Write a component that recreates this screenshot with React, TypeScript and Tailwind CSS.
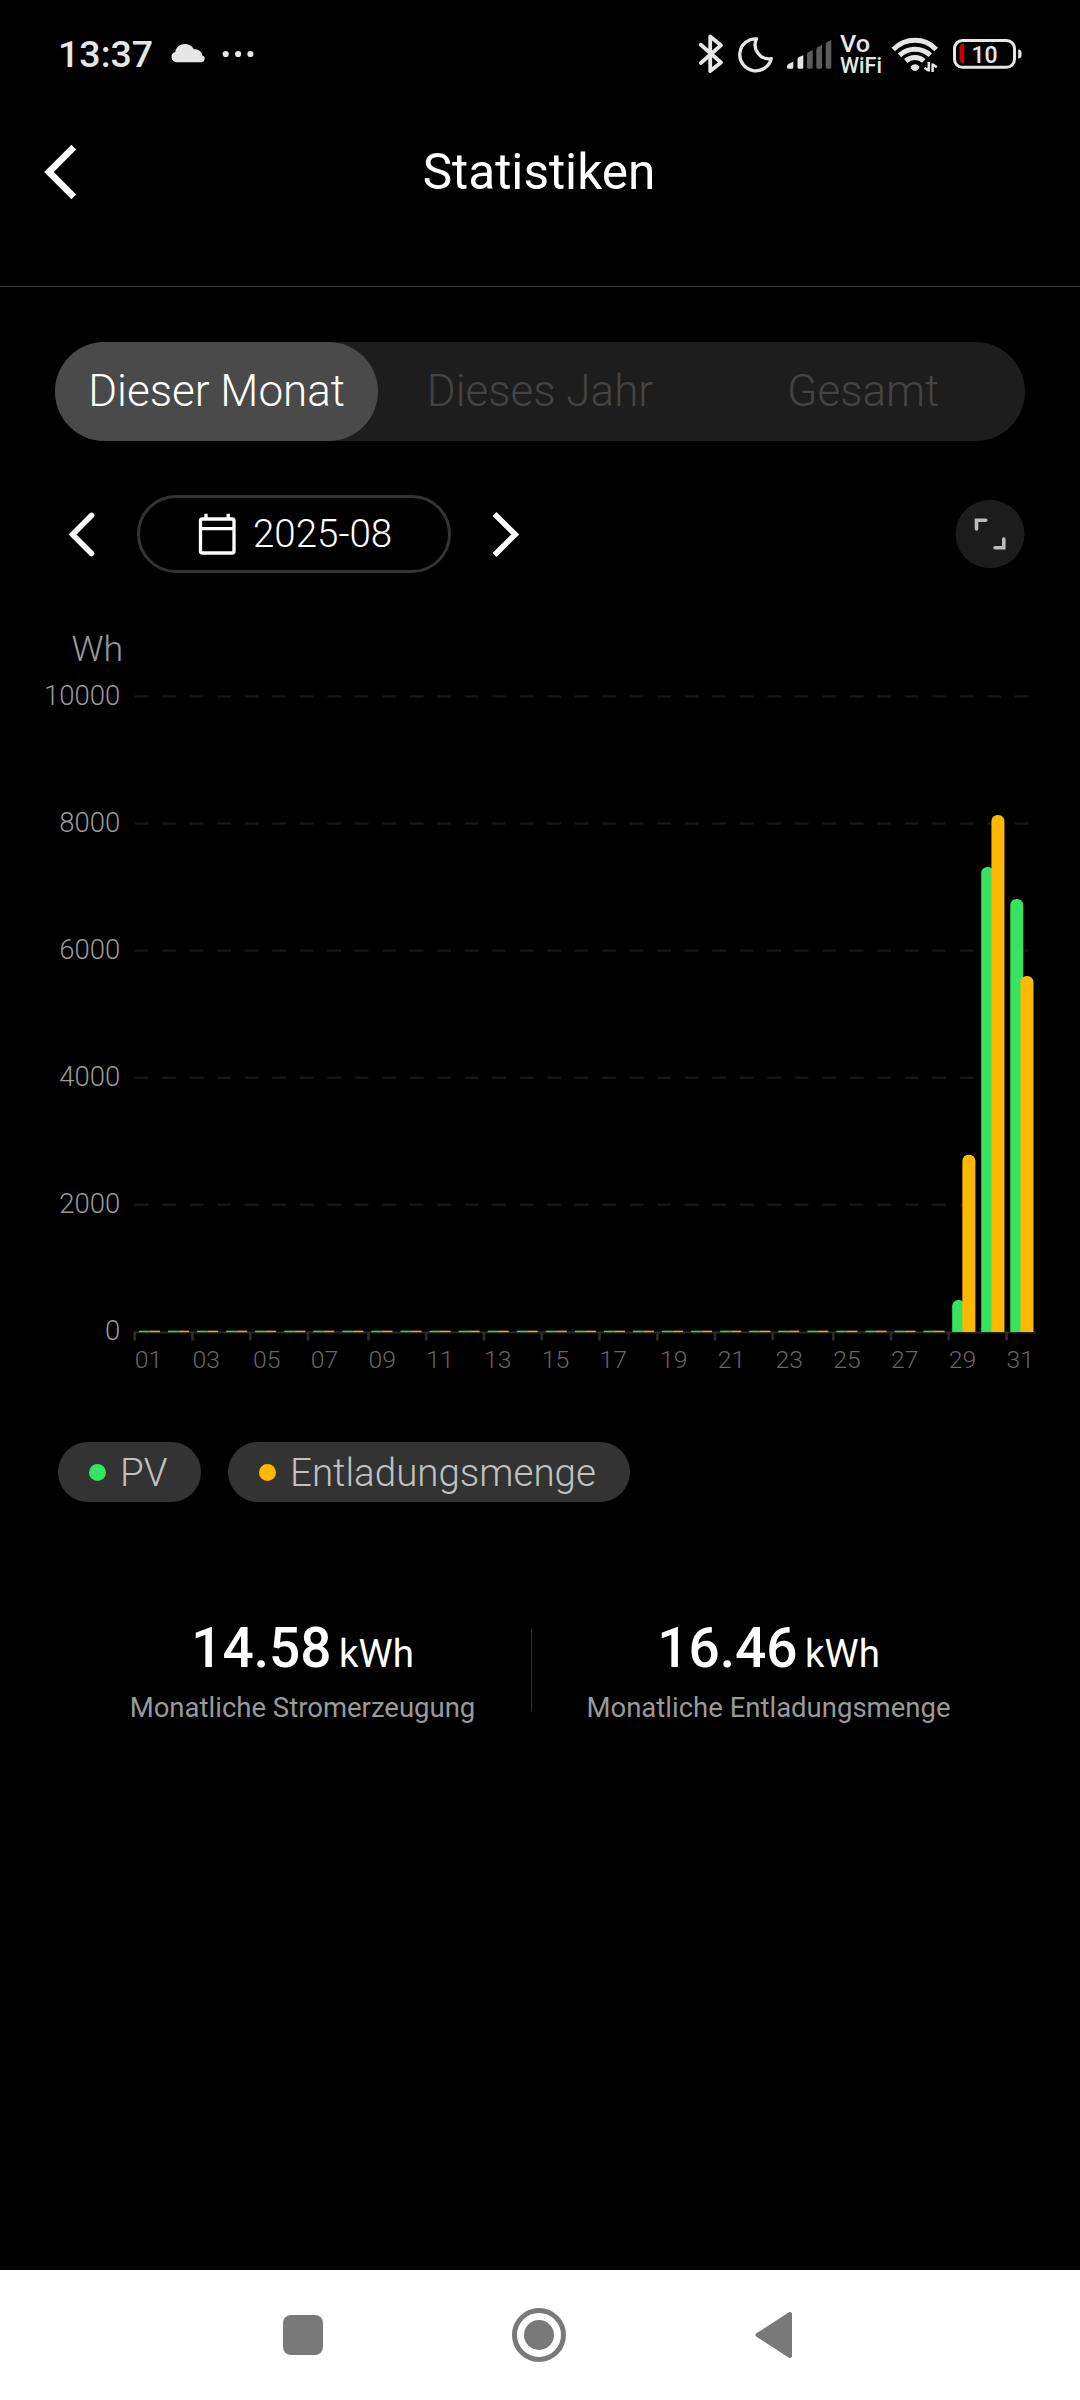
const PX = 2.75;
const BAND = 327.6 / 31;
const GREEN = "#38e45f";
const ORANGE = "#ffb800";
const BASE_Y = 1332;

const days = Array.from({ length: 31 }, (_, i) => ({
  day: String(i + 1).padStart(2, "0"),
  pvTop: [1300, 867, 899][i - 28],
  outTop: [1154.7, 815, 976][i - 28],
}));

const gridLines = [
  { label: "10000", y: 696.4 },
  { label: "8000", y: 823.5 },
  { label: "6000", y: 950.6 },
  { label: "4000", y: 1077.7 },
  { label: "2000", y: 1204.8 },
];

function barPath(x: number, top: number) {
  const w = 13;
  const r = 6;
  return `M${x} ${BASE_Y}V${top + r}a${r} ${r} 0 0 1 ${r} ${-r}h${w - 2 * r}a${r} ${r} 0 0 1 ${r} ${r}V${BASE_Y}Z`;
}

function Chart() {
  return (
    <svg className="block h-[830px] w-[1080px] shrink-0" viewBox="0 590 1080 830" fontFamily="Roboto, sans-serif" fontWeight="300">
      <text x="71.5" y="661" fontSize="35.75" fill="#999999">Wh</text>
      {gridLines.map((g) => (
        <g key={g.label}>
          <text x="120.2" y={g.y + 8.6} fontSize="27.5" fill="#999999" textAnchor="end">{g.label}</text>
          <path d={`M134.75 ${g.y}H1030`} stroke="#161616" strokeWidth="2.4" strokeDasharray="13.75 13.75" />
        </g>
      ))}
      <text x="120.2" y="1340" fontSize="27.5" fill="#999999" textAnchor="end">0</text>
      <path d="M134 1332.4H1036" stroke="#252525" strokeWidth="2.2" />
      {days.map((d, i) => {
        const x = 134.75 + i * BAND * PX;
        const tick = Math.round(49 + i * BAND) * PX;
        const mid = Math.round(49 + (i + 0.5) * BAND) * PX;
        return (
          <g key={d.day}>
            {i % 2 === 0 && <path d={`M${tick} 1332V1340.5`} stroke="#2b2b2b" strokeWidth="2.75" />}
            {i % 2 === 0 && <text x={mid} y="1368" fontSize="24.75" fill="#666666" textAnchor="middle">{d.day}</text>}
            {d.pvTop === undefined ? (
              <g>
                <rect x={x + 4.2} y="1330" width="10.4" height="1" fill="#0f4a1c" />
                <rect x={x + 4.2} y="1331" width="10.4" height="1.2" fill="#57c070" />
                <rect x={x + 14.6} y="1330" width="10.6" height="1" fill="#5a3c00" />
                <rect x={x + 14.6} y="1331" width="10.6" height="1.2" fill="#dba63a" />
              </g>
            ) : (
              <g>
                <path d={barPath(x + 3.7, d.pvTop)} fill={GREEN} />
                <path d={barPath(x + 13.9, d.outTop)} fill={ORANGE} />
              </g>
            )}
          </g>
        );
      })}
    </svg>
  );
}

function StatusBar() {
  return (
    <div className="flex h-[110px] shrink-0 items-center pl-[58px] text-[#e6e6e6]">
      <span className="w-[96px] text-[37.5px] leading-none font-medium">13:37</span>
      <svg className="ml-4 h-[60px] w-[90px]" viewBox="170 25 90 60" fill="currentColor">
        <path d="M176.5 62.2a5.200 5.200 0 0 1-1.200-10.200c.6-4.600 4.400-8 9.700-8 4 0 7.300 2.200 9 5.400 4.400-.4 7.600 2 8.500 6.400a3.300 3.300 0 0 1-1.300 6.400z" />
        <circle cx="225.7" cy="54" r="3.1" />
        <circle cx="238.1" cy="54" r="3.1" />
        <circle cx="250.4" cy="54" r="3.1" />
      </svg>
      <svg className="ml-[430px] h-[60px] w-[390px]" viewBox="690 25 390 60" fill="none" fontFamily="Roboto, sans-serif">
        <g stroke="currentColor" strokeWidth="3.8" strokeLinecap="round" strokeLinejoin="round">
          <path d="M700.800 44.700L721 62.500L710.200 71V36.500L721 45.200L700.800 63" />
          <path d="M756.500 38.800A16 16 0 1 0 771.300 58.600A14 14 0 0 1 756.500 38.800Z" strokeWidth="3.300" />
        </g>
        <g fill="currentColor">
          <path d="M787 66.500q0-2 2-2.800l4.300-2.300v5.800q0 1.500-1.500 1.500h-3.300q-1.500 0-1.500-1.500z" />
          <path d="M797.500 59.500q0-2 2-2.800l3.800-1.500v12q0 1.500-1.500 1.500h-2.800q-1.500 0-1.500-1.500z" />
          <g fill="#5c5c5c">
            <path d="M807 54.500q0-2 2-2.800l3.700-1.700v17.200q0 1.500-1.500 1.500h-2.700q-1.500 0-1.500-1.500z" />
            <path d="M816.300 49.500q0-2 2-2.800l3.700-1.700v22.200q0 1.500-1.500 1.500h-2.700q-1.500 0-1.500-1.500z" />
            <path d="M825.700 44.500q0-2 2-2.800l3.600-1.900v27.400q0 1.500-1.500 1.500h-2.600q-1.500 0-1.500-1.500z" />
          </g>
          <text x="840" y="52" fontSize="23.5" fontWeight="500" textLength="30" lengthAdjust="spacingAndGlyphs">Vo</text>
          <text x="840" y="73" fontSize="22.5" fontWeight="500" textLength="42" lengthAdjust="spacingAndGlyphs">WiFi</text>
        </g>
        <g stroke="currentColor" strokeWidth="5">
          <path d="M893.300 49.500Q902.500 40.300 915 40.300T936.200 49.500" />
          <path d="M899.500 55.300Q906 49.300 915 49.300T930.200 55.300" />
          <path d="M905.700 61Q909.800 57.600 915 57.600T923.800 61" />
        </g>
        <path d="M911 66.500q4-3.500 8 0l-.5 2q-3.500 4-7 0z" fill="currentColor" stroke="currentColor" />
        <path d="M928.800 62V71.500M924.500 67.800L928.500 70.500M932.600 72V63.500M932.800 64.500L936.800 67.200" stroke="currentColor" strokeWidth="2.500" />
        <rect x="954.500" y="40.500" width="60" height="26.800" rx="8" stroke="currentColor" strokeWidth="3" />
        <path d="M1018.200 49.500a3.300 3.300 0 0 1 3.300 3.300v2.400a3.300 3.300 0 0 1-3.300 3.300z" fill="currentColor" />
        <path d="M964.200 43.500V63.500q-4.700 0-4.700-5V48.500q0-5 4.700-5z" fill="#c80000" />
        <text x="984.500" y="63" fontSize="23" fontWeight="500" fill="currentColor" textAnchor="middle">10</text>
      </svg>
    </div>
  );
}

function Header() {
  return (
    <div className="flex h-[177px] shrink-0 items-start border-b border-[#3a3a3a] pt-[26px]">
      <svg className="h-[72px] w-[180px]" viewBox="0 135 180 72" fill="none" stroke="white" strokeWidth="6.8">
        <path d="M73.800 146.200L49 171L73.800 195.800" />
      </svg>
      <h1 className="w-[718px] text-center text-[49.5px] leading-[72px] font-normal">Statistiken</h1>
    </div>
  );
}

function Tabs() {
  return (
    <div className="mx-[55px] mt-[54.5px] flex h-[99px] shrink-0 rounded-full bg-[#1d1d1d] text-[44px] leading-[99px] font-light text-[#444444]">
      <div className="flex-1 rounded-full bg-[#4a4a4a] text-center text-white">Dieser Monat</div>
      <div className="flex-1 text-center">Dieses Jahr</div>
      <div className="flex-1 text-center">Gesamt</div>
    </div>
  );
}

function DateRow() {
  return (
    <div className="mt-[54.5px] flex h-[78px] shrink-0 items-center pl-[55px]">
      <svg className="h-[60px] w-[82px]" viewBox="55 504 82 60" fill="none" stroke="white" strokeWidth="5.6" strokeLinecap="round">
        <path d="M91.500 515.500L72.500 534.500L91.500 553.500" />
      </svg>
      <div className="flex h-[78px] w-[314px] items-center rounded-full border-[3px] border-[#333333] pl-[58px]">
        <svg className="h-[44px] w-[40px]" viewBox="198 512 40 44" fill="none" stroke="white" strokeWidth="3.3">
          <rect x="200.500" y="519" width="33.500" height="34" rx="1.800" />
          <path d="M200.500 528.600H234M206 513.800V519M228.200 513.800V519" />
        </svg>
        <span className="mt-px ml-[15px] text-[38.5px] leading-none font-light">2025-08</span>
      </div>
      <svg className="h-[60px] w-[82px]" viewBox="451.5 504 82 60" fill="none" stroke="white" strokeWidth="5.6">
        <path d="M495 514L515.700 534.500L495 555" />
      </svg>
      <svg className="ml-[422px] h-[70px] w-[70px]" viewBox="955.5 499 70 70" fill="none">
        <ellipse cx="990.500" cy="534" rx="34.500" ry="34.200" fill="#1c1c1c" />
        <path d="M977 529V520.200H986.200M995.500 547.800H1004.300V539" stroke="#bbbbbb" strokeWidth="3.600" strokeLinecap="round" />
      </svg>
    </div>
  );
}

function Legend() {
  return (
    <div className="mt-[22px] flex h-[60px] shrink-0 gap-[27px] pl-[58px] text-[38.5px] leading-[61px] font-light text-[#c2c2c2]">
      <div className="flex w-[143px] items-center rounded-full bg-[#333333] pl-[31px]">
        <span className="h-[17px] w-[17px] rounded-full bg-[#38e45f]" />
        <span className="ml-[14px]">PV</span>
      </div>
      <div className="flex w-[402px] items-center rounded-full bg-[#333333] pl-[31px]">
        <span className="h-[17px] w-[17px] rounded-full bg-[#ffb800]" />
        <span className="ml-[14px]">Entladungsmenge</span>
      </div>
    </div>
  );
}

function Stat({ value, label }: { value: string; label: string }) {
  return (
    <div className="flex flex-col items-center">
      <div className="flex h-[76px] items-baseline gap-[7.5px] leading-[76px]">
        <span className="text-[55px] font-medium">{value}</span>
        <span className="text-[38.5px]">kWh</span>
      </div>
      <div className="h-[44px] text-[27.5px] leading-[44px] text-[#999999]">{label}</div>
    </div>
  );
}

function Stats() {
  return (
    <div className="mt-[108px] grid h-[124px] shrink-0 grid-cols-[459px_473px] pl-[73px]">
      <Stat value="14.58" label="Monatliche Stromerzeugung" />
      <div className="relative">
        <div className="absolute top-[19px] -left-px h-[82px] w-px bg-[#333333]" />
        <Stat value="16.46" label="Monatliche Entladungsmenge" />
      </div>
    </div>
  );
}

function NavBar() {
  return (
    <div className="mt-auto flex h-[130px] shrink-0 items-center bg-white">
      <div className="ml-[283px] h-[40px] w-[40px] rounded-[8px] bg-[#797979]" />
      <div className="ml-[189px] flex h-[54px] w-[54px] items-center justify-center rounded-full border-[5px] border-[#797979]">
        <div className="h-[30px] w-[30px] rounded-full bg-[#797979]" />
      </div>
      <svg className="ml-[184px] h-[56px] w-[50px]" viewBox="750 2307 50 56" fill="#797979" stroke="#797979" strokeWidth="4" strokeLinejoin="round">
        <path d="M790 2314V2356L757.500 2335Z" />
      </svg>
    </div>
  );
}

export default function App() {
  return (
    <main className="flex h-[2400px] w-[1080px] flex-col overflow-hidden bg-black font-[Roboto,sans-serif] text-white">
      <StatusBar />
      <Header />
      <Tabs />
      <DateRow />
      <div className="mt-[17px] flex flex-col">
        <Chart />
        <Legend />
      </div>
      <Stats />
      <NavBar />
    </main>
  );
}
